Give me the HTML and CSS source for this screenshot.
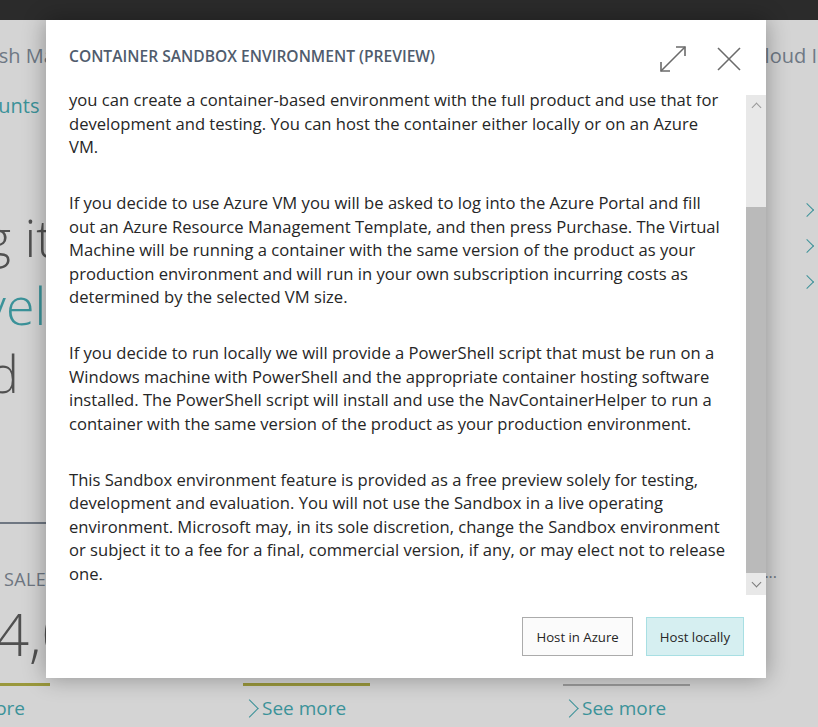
FILE: index.html
```html
<!DOCTYPE html>
<html lang="en">
<head>
<meta charset="utf-8">
<title>Container Sandbox Environment (Preview)</title>
<link rel="stylesheet" href="styles.css">
</head>
<body>
<div class="topbar"></div>
<div class="page">
  <div class="nav">
    <span class="nav-left">Cash Management</span>
    <span class="nav-right">Cloud Integration</span>
  </div>
  <div class="subnav">Chart of Accounts</div>
  <div class="middle">
    <div class="hero">
      <div class="hero-line l1">g it</div>
      <div class="hero-line l2 teal">vel</div>
      <div class="hero-line l3">d</div>
    </div>
    <ul class="links">
      <li><span class="chev"></span></li>
      <li><span class="chev"></span></li>
      <li><span class="chev"></span></li>
    </ul>
  </div>
  <div class="divider"></div>
  <div class="cues">
    <div class="cue-head">
      <span class="cue-title">SALES THIS MONTH</span>
      <span class="cue-more">...</span>
    </div>
    <div class="cue-value">4,0</div>
    <div class="tiles">
      <div class="tile"><div class="bar olive"></div><a class="see">See more</a></div>
      <div class="tile"><div class="bar olive"></div><a class="see"><span class="see-chev"></span>See more</a></div>
      <div class="tile"><div class="bar grey"></div><a class="see"><span class="see-chev"></span>See more</a></div>
    </div>
  </div>
</div>

<div class="dialog" role="dialog" aria-labelledby="dlg-title">
  <div class="dlg-header">
    <h1 id="dlg-title" class="dlg-title">Container Sandbox Environment (Preview)</h1>
    <div class="dlg-actions">
      <button class="icon-btn" aria-label="Expand">
        <svg width="28" height="28" viewBox="0 0 28 28" fill="none" stroke="#6b6b6b" stroke-width="1.6">
          <path d="M2 26 L26 2"/>
          <path d="M17 2 H26 V11"/>
          <path d="M2 17 V26 H11"/>
        </svg>
      </button>
      <button class="icon-btn" aria-label="Close">
        <svg width="24" height="24" viewBox="0 0 24 24" fill="none" stroke="#6b6b6b" stroke-width="1.6">
          <path d="M1 1 L23 23"/>
          <path d="M23 1 L1 23"/>
        </svg>
      </button>
    </div>
  </div>
  <div class="dlg-body">
    <div class="dlg-content">
      <p>In addition to the sandbox environment that runs in the online service,<br>you can create a container-based environment with the full product and use that for development and testing. You can host the container either locally or on an Azure<br>VM.</p>
      <p>If you decide to use Azure VM you will be asked to log into the Azure Portal and fill<br>out an Azure Resource Management Template, and then press Purchase. The Virtual Machine will be running a container with the same version of the product as your production environment and will run in your own subscription incurring costs as determined by the selected VM size.</p>
      <p>If you decide to run locally we will provide a PowerShell script that must be run on a Windows machine with PowerShell and the appropriate container hosting software installed. The PowerShell script will install and use the NavContainerHelper to run a container with the same version of the product as your production environment.</p>
      <p>This Sandbox environment feature is provided as a free preview solely for testing, development and evaluation. You will not use the Sandbox in a live operating environment. Microsoft may, in its sole discretion, change the Sandbox environment or subject it to a fee for a final, commercial version, if any, or may elect not to release one.</p>
    </div>
    <div class="scrollbar" aria-hidden="true">
      <div class="sb-btn"><span class="sb-up"></span></div>
      <div class="sb-track"><div class="sb-thumb"></div></div>
      <div class="sb-btn sb-btn-down"><span class="sb-down"></span></div>
    </div>
  </div>
  <div class="dlg-footer">
    <button class="btn">Host in Azure</button>
    <button class="btn btn-primary">Host locally</button>
  </div>
</div>
</body>
</html>
```

FILE: styles.css
```css
* { box-sizing: border-box; }
html, body {
  margin: 0;
  padding: 0;
  width: 818px;
  height: 727px;
  overflow: hidden;
  background: #d4d4d4;
  font-family: "Open Sans", "Noto Sans", sans-serif;
}
.topbar {
  height: 20px;
  background: #2b2b2b;
}
.page {
  height: 707px;
  overflow: hidden;
  color: #6e7884;
}
.nav {
  display: flex;
  height: 60px;
  padding-top: 24px;
  font-size: 20px;
  line-height: 24px;
  white-space: nowrap;
}
.nav-left {
  margin-left: -25px;
  width: 777px;
  flex: none;
  overflow: hidden;
}
.nav-right { flex: none; }
.subnav {
  margin-left: -126px;
  font-size: 20px;
  line-height: 24px;
  color: #3b9299;
  height: 64px;
  padding-top: 14px;
  white-space: nowrap;
}
.middle {
  display: flex;
  justify-content: space-between;
  height: 378px;
}
.hero {
  padding-top: 59px;
  font-family: "Open Sans", sans-serif;
  font-weight: 300;
  font-size: 52px;
  line-height: 68px;
  color: #505050;
  white-space: nowrap;
}
.hero-line.l1 { margin-left: -16px; }
.hero-line.l2 { margin-left: -18px; }
.hero-line.l3 { margin-left: -12px; }
.hero-line.teal { color: #3b9299; }
.links {
  list-style: none;
  margin: 0;
  padding: 57px 6px 0 0;
  display: flex;
  flex-direction: column;
  gap: 18px;
}
.links li { height: 18px; display: flex; align-items: center; }
.chev {
  display: block;
  width: 10px;
  height: 10px;
  border-top: 1.6px solid #3b9299;
  border-right: 1.6px solid #3b9299;
  transform: rotate(45deg);
}
.divider {
  height: 2px;
  background: #6f7782;
  width: 300px;
}
.cue-head {
  display: flex;
  justify-content: space-between;
  padding-top: 43px;
  height: 70px;
  white-space: nowrap;
}
.cue-title {
  margin-left: 4px;
  font-size: 18px;
  line-height: 24px;
  letter-spacing: 0.4px;
  color: #6e7681;
}
.cue-more {
  margin-right: 41px;
  font-size: 16px;
  color: #6e7681;
  line-height: 10px;
}
.cue-value {
  font-weight: 300;
  font-size: 58px;
  line-height: 56px;
  color: #505050;
  margin-left: -4px;
  height: 89px;
  padding-top: 12px;
}
.tiles {
  display: flex;
  gap: 193px;
  margin-left: -77px;
}
.tile {
  width: 127px;
  flex: none;
}
.bar { height: 3px; }
.bar.olive { background: #9a983c; }
.bar.grey { height: 2px; background: #9a9a9a; margin-top: 1px; }
.see {
  display: flex;
  align-items: center;
  gap: 6px;
  color: #3b9299;
  font-size: 19px;
  line-height: 24px;
  padding-top: 10px;
  margin-left: 6px;
  white-space: nowrap;
}
.tile:first-child .see { justify-content: flex-end; margin-left: 0; margin-right: 25px; }
.see-chev {
  display: block;
  width: 13px;
  height: 13px;
  border-top: 1.3px solid #3b9299;
  border-right: 1.3px solid #3b9299;
  transform: rotate(45deg);
  margin-left: -6px;
}

/* Dialog */
.dialog {
  position: absolute;
  left: 46px;
  top: 20px;
  width: 720px;
  height: 658px;
  background: #ffffff;
  box-shadow: 0 0 22px rgba(0, 0, 0, 0.33);
  display: flex;
  flex-direction: column;
}
.dlg-header {
  height: 75px;
  display: flex;
  align-items: center;
  justify-content: space-between;
  padding: 0 25px 0 23px;
}
.dlg-title {
  margin: 0 0 3px;
  font-size: 15.6px;
  font-weight: 600;
  text-transform: uppercase;
  color: #505c6d;
}
.dlg-actions {
  display: flex;
  align-items: center;
  gap: 30px;
  padding-top: 2px;
}
.icon-btn {
  border: 0;
  background: none;
  padding: 0;
  margin: 0;
  display: block;
}
.icon-btn svg { display: block; }
.dlg-body {
  height: 500px;
  display: flex;
}
.dlg-content {
  flex: 1;
  overflow: hidden;
  display: flex;
  flex-direction: column;
  justify-content: flex-end;
  padding: 0 12px 10px 23px;
  font-size: 16.6px;
  line-height: 23.5px;
  color: #262626;
}
.dlg-content p {
  margin: 32.5px 0 0;
  flex: none;
}
.scrollbar {
  width: 20px;
  display: flex;
  flex-direction: column;
  background: #e8e8e8;
}
.sb-btn {
  height: 20px;
  display: flex;
  align-items: center;
  justify-content: center;
  flex: none;
}
.sb-btn-down { height: 22px; }
.sb-up, .sb-down {
  display: block;
  width: 7px;
  height: 7px;
  border-top: 1px solid #9a9a9a;
  border-left: 1px solid #9a9a9a;
}
.sb-up { transform: rotate(45deg); margin-top: 4px; }
.sb-down { transform: rotate(-135deg); margin-top: -4px; border-color: #7b7b7b; }
.sb-track {
  flex: 1;
  display: flex;
  flex-direction: column;
  justify-content: flex-end;
}
.sb-thumb {
  height: 366px;
  background: #bababa;
}
.dlg-footer {
  flex: 1;
  display: flex;
  justify-content: flex-end;
  align-items: flex-start;
  gap: 13px;
  padding: 22px 22px 0;
}
.btn {
  height: 39px;
  padding: 0 13px;
  font-family: "Open Sans", sans-serif;
  font-size: 13.2px;
  color: #262626;
  background: #fbfbfb;
  border: 1px solid #ababab;
}
.btn-primary {
  background: #d6eff1;
  border-color: #a8dfe3;
}
```
